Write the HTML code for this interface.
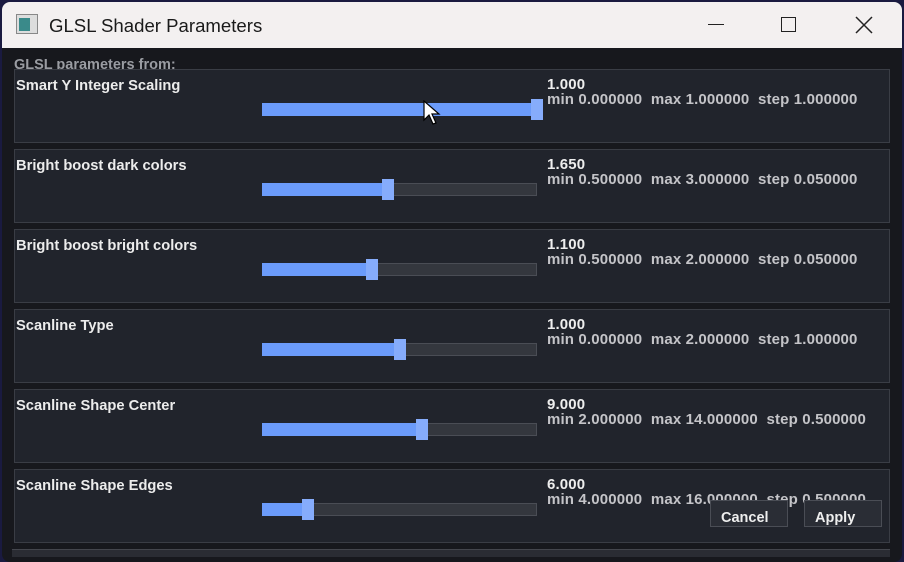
<!DOCTYPE html><html><head><style>
*{margin:0;padding:0;box-sizing:border-box}
body{width:904px;height:557px;background:#1a1a40;position:relative;overflow:hidden;font-family:"Liberation Sans",sans-serif}
.win{position:absolute;left:2px;top:2px;width:900px;height:560px;background:#17181d;border-radius:8px;overflow:hidden}
.tb{position:absolute;left:0;top:0;width:900px;height:46px;background:#f3f0f0;color:#1a1a1a}
.tb .t{position:absolute;left:47px;top:13px;font-size:18.6px}
.p{position:absolute;left:14px;width:876px;height:74px;background:#21242c;border:1px solid #3a3d45}
.lab{position:absolute;left:1px;top:8px;font-size:14.7px;font-weight:bold;color:#ececec}
.v{position:absolute;left:532px;top:7px;font-size:15px;font-weight:bold;color:#eee;line-height:15px;letter-spacing:0.15px}
.v span{color:#c4c4c8;white-space:pre}
.tr{position:absolute;left:247px;top:33px;width:275px;height:13px;background:#34373e;border:1px solid #4a4d55}
.f{position:absolute;left:247px;top:33px;height:13px;background:#6b9bfa}
.th{position:absolute;top:29px;width:12px;height:21px;background:#86acfb}
.btn{position:absolute;top:500px;height:27px;background:#2a2d35;border:1px solid #4a4d55;color:#eee;font-size:14.5px;font-weight:bold;padding:9px 0 0 10px}
</style></head><body>
<div class="win">
<div class="tb">
<div style="position:absolute;left:14px;top:12px;width:22px;height:20px;background:#ddd;border:1px solid #888"><div style="position:absolute;left:2px;top:3px;width:11px;height:13px;background:#3a8a8a"></div></div>
<div class="t">GLSL Shader Parameters</div>
<div style="position:absolute;left:706px;top:22px;width:16px;height:1px;background:#222"></div>
<div style="position:absolute;left:779px;top:15px;width:15px;height:15px;border:1.5px solid #222"></div>
<svg style="position:absolute;left:853px;top:14px" width="18" height="18"><path d="M1 1L17 17M17 1L1 17" stroke="#222" stroke-width="1.5"/></svg>
</div>
<div style="position:absolute;left:12px;top:55px;font-size:14.5px;font-weight:bold;color:#9a9ca2">GLSL parameters from:</div>
</div>
<div style="position:absolute;left:0;top:0">
<div class="p" style="top:69px"><div class="lab">Smart Y Integer Scaling</div><div class="v">1.000<br><span>min 0.000000  max 1.000000  step 1.000000</span></div><div class="tr"></div><div class="f" style="width:275px"></div><div class="th" style="left:516px"></div></div>
<div class="p" style="top:149px"><div class="lab">Bright boost dark colors</div><div class="v">1.650<br><span>min 0.500000  max 3.000000  step 0.050000</span></div><div class="tr"></div><div class="f" style="width:124px"></div><div class="th" style="left:367px"></div></div>
<div class="p" style="top:229px"><div class="lab">Bright boost bright colors</div><div class="v">1.100<br><span>min 0.500000  max 2.000000  step 0.050000</span></div><div class="tr"></div><div class="f" style="width:108px"></div><div class="th" style="left:351px"></div></div>
<div class="p" style="top:309px"><div class="lab">Scanline Type</div><div class="v">1.000<br><span>min 0.000000  max 2.000000  step 1.000000</span></div><div class="tr"></div><div class="f" style="width:136px"></div><div class="th" style="left:379px"></div></div>
<div class="p" style="top:389px"><div class="lab">Scanline Shape Center</div><div class="v">9.000<br><span>min 2.000000  max 14.000000  step 0.500000</span></div><div class="tr"></div><div class="f" style="width:158px"></div><div class="th" style="left:401px"></div></div>
<div class="p" style="top:469px"><div class="lab">Scanline Shape Edges</div><div class="v">6.000<br><span>min 4.000000  max 16.000000  step 0.500000</span></div><div class="tr"></div><div class="f" style="width:44px"></div><div class="th" style="left:287px"></div></div>
<div class="btn" style="left:710px;width:78px">Cancel</div>
<div class="btn" style="left:804px;width:78px">Apply</div>
<div style="position:absolute;left:12px;top:549px;width:878px;height:8px;background:#2a2c33;border-top:1px solid #44464d"></div>
<svg style="position:absolute;left:423px;top:100px" width="18" height="28"><path d="M1 1L1 20L6 15L10 24L13 23L9 14L16 14Z" fill="#fff" stroke="#000" stroke-width="1.2"/></svg>
</div>
</body></html>
